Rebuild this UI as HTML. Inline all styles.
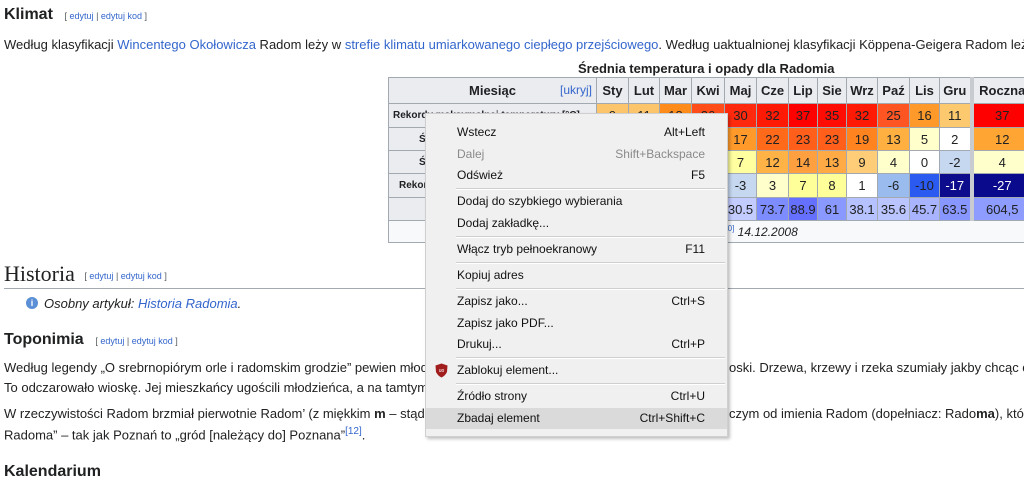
<!DOCTYPE html>
<html><head><meta charset="utf-8"><style>
*{margin:0;padding:0;box-sizing:border-box}
body{width:1024px;height:470px;overflow:hidden;background:#fff;font-family:"Liberation Sans",Arial,sans-serif;color:#202122;font-size:13px;position:relative}
.a{position:absolute;white-space:nowrap}
a,.l{color:#3366cc;text-decoration:none}
.ed{font-size:9px;color:#54595d;font-weight:normal}
.ed span{color:#3366cc}
h2{font-size:16px;font-weight:bold}
table{position:absolute;left:388px;top:77px;border-collapse:collapse;font-size:13px;text-align:center;table-layout:fixed;width:643px}
td,th{border:1px solid #a2a9b1;padding:0;overflow:hidden;white-space:nowrap}
th{background:#eaecf0;font-weight:bold}
.rh{text-align:left;padding-left:4px;font-size:10px;background:#eaecf0;font-weight:bold}
.rr{border-left:4px solid #c8ccd1}
.menu{position:absolute;left:425px;top:113px;width:303px;height:324px;background:#f0f0f0;border:1px solid #cfcfcf;box-shadow:2px 2px 3px rgba(0,0,0,.25);font-size:12px;color:#111}
.mi{position:absolute;left:0;right:0;height:21px;line-height:21px;padding-left:31px}
.mi .k{position:absolute;right:22px;top:0}
.sep{position:absolute;left:30px;right:2px;height:2px;border-top:1px solid #cfcfcf;border-bottom:1px solid #fff}
</style></head><body>
<div class="a" style="left:4px;top:6px"><h2 style="display:inline">Klimat</h2> <span class="ed" style="margin-left:8px">[ <span>edytuj</span> | <span>edytuj kod</span> ]</span></div>
<div class="a" style="left:4px;top:37px;width:1020px;overflow:hidden">Według klasyfikacji <a>Wincentego Okołowicza</a> Radom leży w <a>strefie klimatu umiarkowanego ciepłego przejściowego</a>. Według uaktualnionej klasyfikacji Köppena-Geigera Radom leży</div>

<div class="a" style="left:578px;top:61px;font-weight:bold;font-size:13px">Średnia temperatura i opady dla Radomia</div>
<table>
<colgroup><col style="width:208px"><col style="width:32px"><col style="width:31px"><col style="width:32px"><col style="width:33px"><col style="width:32px"><col style="width:32px"><col style="width:29px"><col style="width:29px"><col style="width:31px"><col style="width:32px"><col style="width:30px"><col style="width:32px"><col style="width:60px"></colgroup>
<tr style="height:26px"><th style="position:relative">Miesiąc<span style="position:absolute;right:4px;top:5px;font-weight:normal;font-size:12px;color:#3366cc">[ukryj]</span></th><th>Sty</th><th>Lut</th><th>Mar</th><th>Kwi</th><th>Maj</th><th>Cze</th><th>Lip</th><th>Sie</th><th>Wrz</th><th>Paź</th><th>Lis</th><th>Gru</th><th class="rr">Roczna</th></tr>
<tr style="height:24px"><td class="rh">Rekordy maksymalnej temperatury [°C]</td><td style="background:#fdc56b">9</td><td style="background:#fdc56b">11</td><td style="background:#ff8c1a">18</td><td style="background:#ff4d1a">26</td><td style="background:#ff2a0d">30</td><td style="background:#ff1a05">32</td><td style="background:#ff0000">37</td><td style="background:#ff0d05">35</td><td style="background:#ff1a05">32</td><td style="background:#ff5522">25</td><td style="background:#ff9a2a">16</td><td style="background:#fdc96e">11</td><td class="rr" style="background:#ff0000">37</td></tr>
<tr style="height:23px"><td class="rh" style="padding-left:30px">Średnia</td><td style="background:#ffe0a0">1</td><td style="background:#ffd890">2</td><td style="background:#ffb347">7</td><td style="background:#ff9a30">13</td><td style="background:#ff9a2a">17</td><td style="background:#ff6a1a">22</td><td style="background:#ff5f1a">23</td><td style="background:#ff5f1a">23</td><td style="background:#ff8420">19</td><td style="background:#ffb040">13</td><td style="background:#ffffcc">5</td><td style="background:#fff">2</td><td class="rr" style="background:#ffa533">12</td></tr>
<tr style="height:23px"><td class="rh" style="padding-left:30px">Średnia</td><td style="background:#dde6f5">-3</td><td style="background:#dde6f5">-2</td><td style="background:#fff">0</td><td style="background:#ffffcc">4</td><td style="background:#ffffa0">7</td><td style="background:#ffb347">12</td><td style="background:#ffa040">14</td><td style="background:#ffaa44">13</td><td style="background:#ffcc77">9</td><td style="background:#ffffcc">4</td><td style="background:#fff">0</td><td style="background:#c6d8f0">-2</td><td class="rr" style="background:#ffffcc">4</td></tr>
<tr style="height:24px"><td class="rh" style="padding-left:10px">Rekordy minimalnej temperatury [°C]</td><td style="background:#2a52ee;color:#fff">-20</td><td style="background:#2a52ee;color:#fff">-20</td><td style="background:#6699ee">-12</td><td style="background:#99bbee">-6</td><td style="background:#c6d8f0">-3</td><td style="background:#ffffcc">3</td><td style="background:#ffff99">7</td><td style="background:#ffff99">8</td><td style="background:#fff">1</td><td style="background:#99bbee">-6</td><td style="background:#2a5af0">-10</td><td style="background:#0c0c8c;color:#fff">-17</td><td class="rr" style="background:#0a0a8c;color:#fff">-27</td></tr>
<tr style="height:23px"><td class="rh">&nbsp;</td><td style="background:#b0bcff">35</td><td style="background:#b0bcff">30</td><td style="background:#b0bcff">30</td><td style="background:#b0bcff">40</td><td style="background:#c2ccff">30.5</td><td style="background:#7d8cff">73.7</td><td style="background:#6670ff">88.9</td><td style="background:#8a99ff">61</td><td style="background:#b6c2ff">38.1</td><td style="background:#bac4ff">35.6</td><td style="background:#a8b4ff">45.7</td><td style="background:#8896ff">63.5</td><td class="rr" style="background:#8e9cff">604,5</td></tr>
<tr style="height:22px"><td colspan="14" style="background:#f8f9fa;text-align:left;padding-left:332px;font-style:italic;font-size:12px"><sup style="font-size:8px;color:#3366cc;font-style:normal">[10]</sup> 14.12.2008</td></tr>
</table>

<div class="a" style="left:4px;top:261px;font-family:'Liberation Serif',serif;font-size:22px">Historia <span class="ed" style="font-family:'Liberation Sans',sans-serif;margin-left:4px;vertical-align:middle">[ <span>edytuj</span> | <span>edytuj kod</span> ]</span></div>
<div class="a" style="left:4px;top:288px;width:1020px;height:1px;background:#a2a9b1"></div>
<div class="a" style="left:26px;top:297px;width:12px;height:12px;border-radius:50%;background:#5b8fd6;color:#fff;font-size:9px;font-weight:bold;text-align:center;line-height:12px">i</div>
<div class="a" style="left:44px;top:296px;font-style:italic">Osobny artykuł: <a>Historia Radomia</a>.</div>
<div class="a" style="left:4px;top:331px"><h2 style="display:inline">Toponimia</h2> <span class="ed" style="margin-left:8px">[ <span>edytuj</span> | <span>edytuj kod</span> ]</span></div>
<div class="a" style="left:4px;top:360px;width:440px;overflow:hidden">Według legendy „O srebrnopiórym orle i radomskim grodzie” pewien młodzieniec przybył do wioski</div>
<div class="a" style="left:729px;top:360px;width:295px;overflow:hidden">oski. Drzewa, krzewy i rzeka szumiały jakby chcąc coś</div>
<div class="a" style="left:4px;top:380px;width:440px;overflow:hidden">To odczarowało wioskę. Jej mieszkańcy ugościli młodzieńca, a na tamtym miejscu</div>
<div class="a" style="left:4px;top:406px;width:440px;overflow:hidden">W rzeczywistości Radom brzmiał pierwotnie Radom’ (z miękkim <b>m</b> – stąd przymiotnik</div>
<div class="a" style="left:729px;top:406px;width:295px;overflow:hidden">czym od imienia Radom (dopełniacz: Rado<b>ma</b>), który</div>
<div class="a" style="left:4px;top:426px">Radoma” – tak jak Poznań to „gród [należący do] Poznana”<sup style="font-size:10px;color:#3366cc">[12]</sup>.</div>
<div class="a" style="left:4px;top:463px"><h2 style="display:inline">Kalendarium</h2></div>

<div class="menu">
<div class="mi" style="top:8px">Wstecz<span class="k">Alt+Left</span></div>
<div class="mi" style="top:30px;color:#8a8a8a">Dalej<span class="k">Shift+Backspace</span></div>
<div class="mi" style="top:51px">Odśwież<span class="k">F5</span></div>
<div class="sep" style="top:74px"></div>
<div class="mi" style="top:77px">Dodaj do szybkiego wybierania</div>
<div class="mi" style="top:99px">Dodaj zakładkę...</div>
<div class="sep" style="top:122px"></div>
<div class="mi" style="top:125px">Włącz tryb pełnoekranowy<span class="k">F11</span></div>
<div class="sep" style="top:148px"></div>
<div class="mi" style="top:151px">Kopiuj adres</div>
<div class="sep" style="top:174px"></div>
<div class="mi" style="top:177px">Zapisz jako...<span class="k">Ctrl+S</span></div>
<div class="mi" style="top:199px">Zapisz jako PDF...</div>
<div class="mi" style="top:220px">Drukuj...<span class="k">Ctrl+P</span></div>
<div class="sep" style="top:243px"></div>
<div class="mi" style="top:246px">Zablokuj element...</div>
<svg style="position:absolute;left:9px;top:249px" width="13" height="15" viewBox="0 0 13 15"><path d="M6.5 0.5 L12.5 2.5 L12 9 Q10 13 6.5 14.5 Q3 13 1 9 L0.5 2.5 Z" fill="#a11d1d"/><text x="6.5" y="9" font-size="5" fill="#fff" text-anchor="middle" font-family="Liberation Sans">uo</text></svg>
<div class="sep" style="top:269px"></div>
<div class="mi" style="top:272px">Źródło strony<span class="k">Ctrl+U</span></div>
<div class="mi" style="top:294px;background:#dadada">Zbadaj element<span class="k">Ctrl+Shift+C</span></div>
</div>
</body></html>
